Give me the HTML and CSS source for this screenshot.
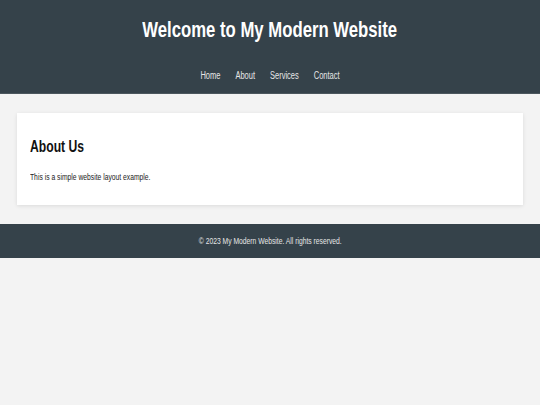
FILE: index.html
```html
<!DOCTYPE html>
<html>
<head>
<meta charset="utf-8">
<link rel="stylesheet" href="styles.css">
</head>
<body>
<header class="site-header">
  <h1 class="site-title"><span class="sq">Welcome to My Modern Website</span></h1>
  <nav class="site-nav">
    <a href="#">Home</a>
    <a href="#">About</a>
    <a href="#">Services</a>
    <a href="#">Contact</a>
  </nav>
</header>
<main class="main">
  <section class="card">
    <h2 class="card-title"><span class="sq sq-left">About Us</span></h2>
    <p class="card-text"><span class="sq sq-left">This is a simple website layout example.</span></p>
  </section>
</main>
<footer class="site-footer">
  <p><span class="sq">© 2023 My Modern Website. All rights reserved.</span></p>
</footer>
</body>
</html>
```

FILE: styles.css
```css
* { box-sizing: border-box; }
body {
  margin: 0;
  background: #f3f3f3;
  font-family: "Liberation Sans", Arial, sans-serif;
  color: #111;
}
.sq {
  display: inline-block;
  transform: scaleX(0.76);
  transform-origin: center;
  white-space: nowrap;
}
.sq-left { transform-origin: left; }
.site-header {
  background: #35424a;
  color: #fff;
  text-align: center;
  padding: 16px 0 0;
  height: 94px;
  border-bottom: 1px solid #4b565d;
}
.site-title {
  margin: 0;
  font-size: 22px;
  font-weight: bold;
  line-height: 28px;
}
.site-nav {
  margin-top: 26px;
  display: flex;
  justify-content: center;
  gap: 20px;
  font-size: 10px;
  line-height: 12px;
  transform: scaleX(0.75);
}
.site-nav a {
  color: #e6e6e6;
  text-decoration: none;
}
.main {
  padding: 19px 17px;
}
.card {
  background: #fff;
  padding: 24px 13px 22px;
  box-shadow: 0 1px 4px rgba(0,0,0,0.1);
}
.card-title {
  margin: 0 0 14px;
  font-size: 16px;
  line-height: 20px;
}
.card-text {
  margin: 0;
  font-size: 9px;
  line-height: 12px;
  color: #1a1a1a;
}
.card-text .sq { transform: scaleX(0.75); }
.site-footer {
  background: #35424a;
  color: #e6e6e6;
  text-align: center;
  font-size: 9px;
  padding: 11px 0;
}
.site-footer p { margin: 0; line-height: 12px; }
.site-footer .sq { transform: scaleX(0.75); }
```
